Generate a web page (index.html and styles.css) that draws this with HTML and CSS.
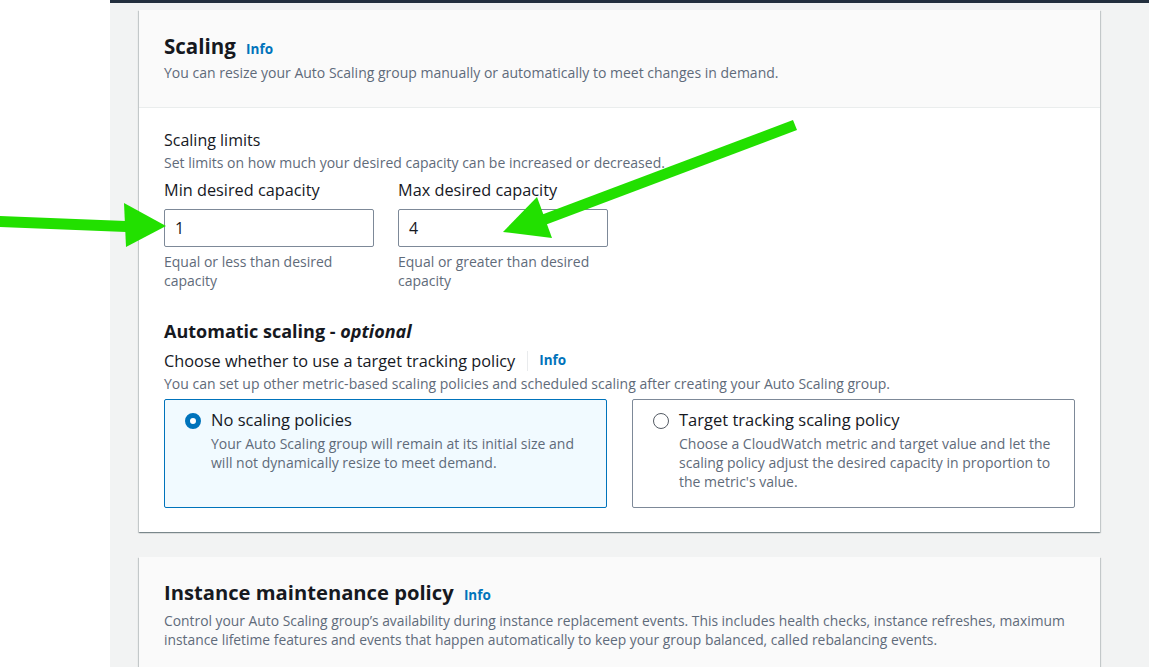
FILE: index.html
```html
<!DOCTYPE html>
<html lang="en">
<head>
<meta charset="utf-8">
<title>Scaling</title>
<link rel="stylesheet" href="styles.css">
</head>
<body>
<div class="page">
  <div class="side"></div>
  <main class="main">
    <section class="card">
      <header class="card-head">
        <h2 class="h2">Scaling <a class="info">Info</a></h2>
        <p class="desc">You can resize your Auto Scaling group manually or automatically to meet changes in demand.</p>
      </header>
      <div class="card-body">
        <div class="sub-title">Scaling limits</div>
        <div class="hint">Set limits on how much your desired capacity can be increased or decreased.</div>
        <div class="fields">
          <div class="field">
            <label class="label">Min desired capacity</label>
            <div class="input">1</div>
            <div class="help">Equal or less than desired capacity</div>
          </div>
          <div class="field">
            <label class="label">Max desired capacity</label>
            <div class="input">4</div>
            <div class="help">Equal or greater than desired capacity</div>
          </div>
        </div>
        <h3 class="h3">Automatic scaling - <i>optional</i></h3>
        <div class="choose">Choose whether to use a target tracking policy <span class="sep"></span><a class="info small">Info</a></div>
        <div class="hint hint2">You can set up other metric-based scaling policies and scheduled scaling after creating your Auto Scaling group.</div>
        <div class="tiles">
          <div class="tile selected">
            <span class="radio on"></span>
            <div class="tile-text">
              <div class="tile-title">No scaling policies</div>
              <div class="tile-desc">Your Auto Scaling group will remain at its initial size and will not dynamically resize to meet demand.</div>
            </div>
          </div>
          <div class="tile">
            <span class="radio"></span>
            <div class="tile-text">
              <div class="tile-title">Target tracking scaling policy</div>
              <div class="tile-desc">Choose a CloudWatch metric and target value and let the scaling policy adjust the desired capacity in proportion to the metric's value.</div>
            </div>
          </div>
        </div>
      </div>
    </section>
    <section class="card card2">
      <header class="card-head head2">
        <h2 class="h2 big">Instance maintenance policy <a class="info">Info</a></h2>
        <p class="desc desc2">Control your Auto Scaling group’s availability during instance replacement events. This includes health checks, instance refreshes, maximum instance lifetime features and events that happen automatically to keep your group balanced, called rebalancing events.</p>
      </header>
    </section>
  </main>
</div>
<svg class="arrows" width="1149" height="667" viewBox="0 0 1149 667">
  <polygon fill="#22e000" points="0,216 126,221 126,232 0,227"/>
  <polygon fill="#22e000" points="124,203 126,247 166,226"/>
  <polygon fill="#22e000" points="797,130 793,120 541,215 545,225"/>
  <polygon fill="#22e000" points="537,197 552,238 503,232"/>
</svg>
</body>
</html>
```
FILE: styles.css
```css
* { box-sizing: border-box; }
html, body { margin: 0; padding: 0; }
body {
  font-family: "Open Sans", "Noto Sans", Arial, sans-serif;
  color: #16191f;
  background: #fff;
  width: 1149px;
  height: 667px;
  overflow: hidden;
  position: relative;
}
.page { display: flex; height: 667px; }
.side { width: 110px; flex: none; background: #fff; }
.main {
  flex: 1;
  background: #f2f3f3;
  border-top: 3px solid #232f3e;
  padding: 7px 49px 0 29px;
  display: flex;
  flex-direction: column;
  gap: 25px;
}
.card {
  background: #fff;
  box-shadow: 0 1px 1px 0 rgba(0,28,36,.3), 1px 1px 1px 0 rgba(0,28,36,.15), -1px 1px 1px 0 rgba(0,28,36,.15);
}
.card-head {
  background: #fafafa;
  border-bottom: 1px solid #eaeded;
  padding: 24px 25px 24px;
}
.h2 {
  margin: 0;
  font-size: 20.5px;
  line-height: 24px;
  height: 24px;
  font-weight: 700;
  color: #16191f;
}
.h2.big { font-size: 20.2px; line-height: 28px; height: 28px; }
.info {
  color: #0073bb;
  font-size: 13.5px;
  line-height: 1;
  font-weight: 700;
  margin-left: 5px;
}
.desc {
  margin: 5px 0 0;
  font-size: 14px;
  line-height: 20px;
  color: #5f6b7a;
}
.card-body { padding: 21px 25px 24px; }
.sub-title { font-size: 16px; line-height: 22px; }
.hint { font-size: 14px; line-height: 20px; color: #5f6b7a; margin-top: 2px; }
.fields { display: flex; gap: 24px; margin-top: 6px; }
.field { width: 210px; }
.label { display: block; font-size: 16.3px; line-height: 22px; margin-bottom: 8px; }
.input {
  height: 38px;
  border: 1px solid #7d8998;
  border-radius: 2px;
  padding: 0 10px;
  font-size: 16px;
  line-height: 36px;
  background: #fff;
}
.help { font-size: 14px; line-height: 19px; color: #5f6b7a; margin-top: 5px; }
.h3 {
  margin: 29px 0 0;
  font-size: 18px;
  line-height: 24px;
  font-weight: 700;
}
.choose {
  margin-top: 7px;
  font-size: 16.3px;
  line-height: 22px;
  display: flex;
  align-items: center;
}
.sep { display: inline-block; width: 1px; height: 20px; background: #e9ebed; margin-left: 12px; }
.info.small { margin-left: 11px; }
.hint2 { margin-top: 2px; }
.tiles { display: flex; gap: 25px; margin-top: 5px; }
.tile {
  flex: 1;
  height: 109px;
  border: 1px solid #7d8998;
  border-radius: 2px;
  padding: 9px 20px;
  display: flex;
  gap: 10px;
  background: #fff;
}
.tile.selected { border-color: #0073bb; background: #f1faff; }
.radio {
  flex: none;
  width: 16px;
  height: 16px;
  border-radius: 50%;
  border: 1.5px solid #545b64;
  margin-top: 4px;
  background: #fff;
}
.radio.on { border: 5px solid #0073bb; }
.tile-title { font-size: 16.5px; line-height: 22px; }
.tile-desc { font-size: 14px; line-height: 19px; color: #5f6b7a; margin-top: 3px; }
.head2 { border-bottom: none; padding-top: 21px; padding-bottom: 30px; }
.desc2 { margin-top: 5px; line-height: 19px; font-size: 13.85px; }
.arrows { position: absolute; top: 0; left: 0; pointer-events: none; }
```
